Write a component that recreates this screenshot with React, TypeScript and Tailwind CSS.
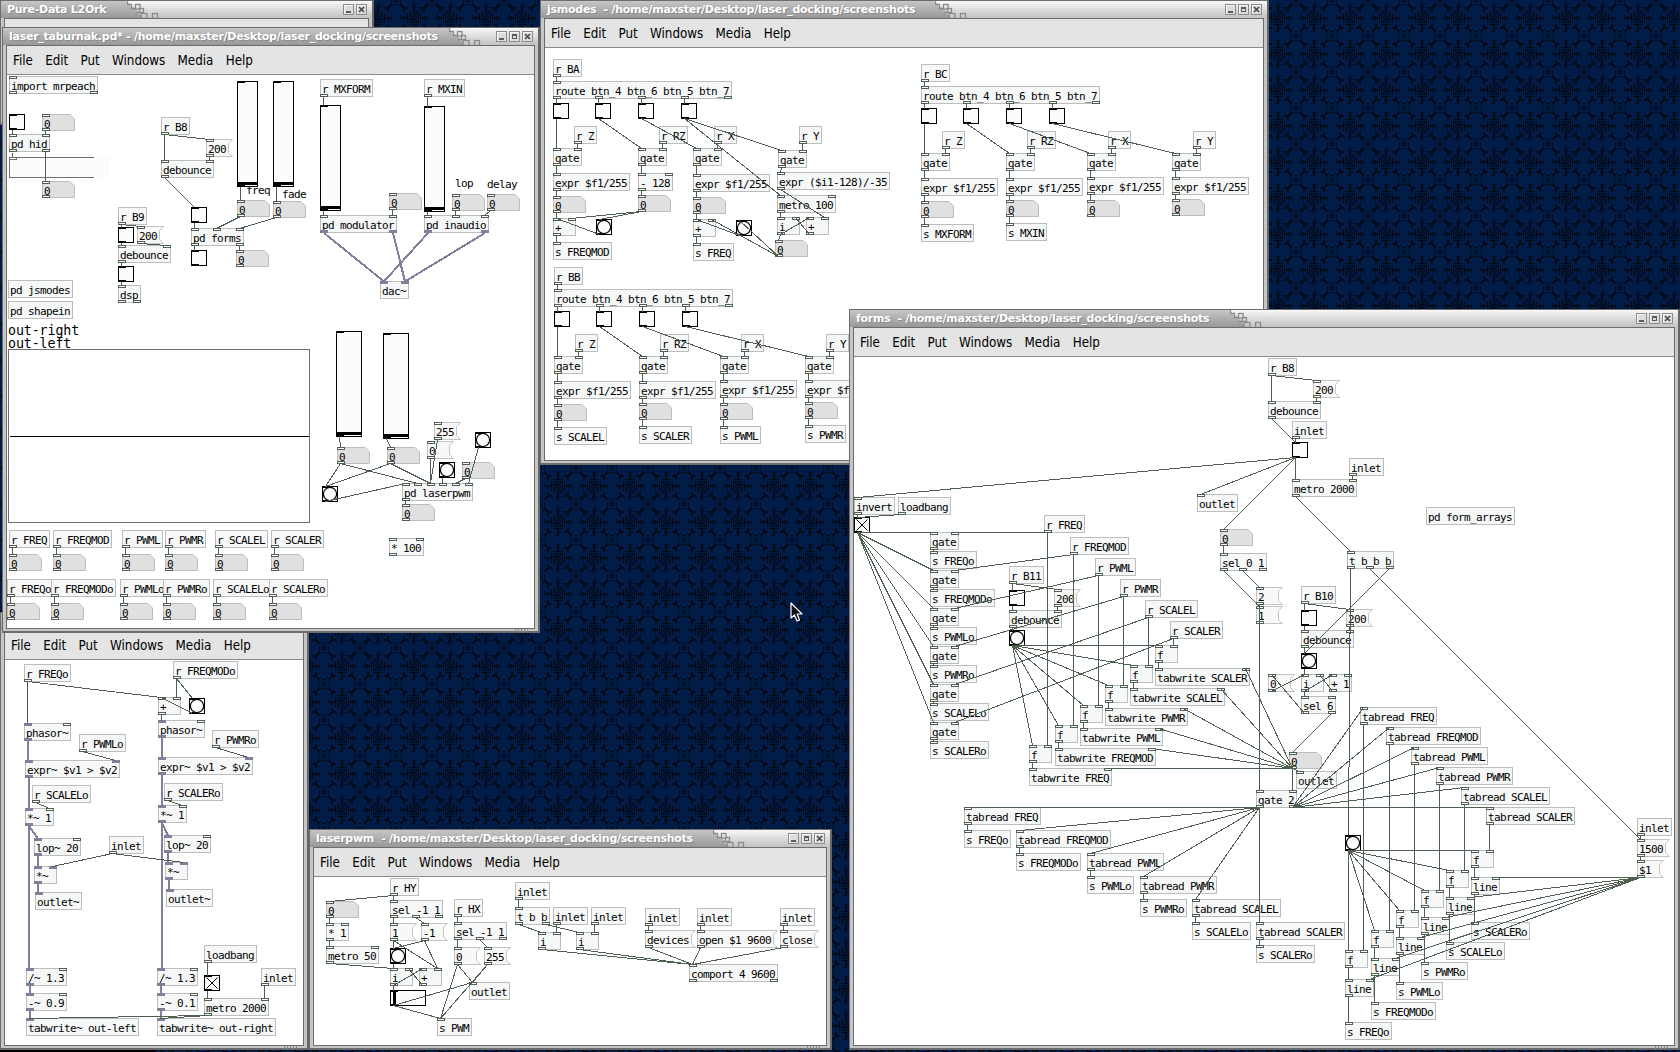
import React from "react";

type Kind = "obj" | "msg" | "num" | "tgl" | "chk" | "bang";

interface PatchNode {
  id: string;
  kind: Kind;
  x: number;
  y: number;
  ins: string;
  outs: string;
  text: string;
  w: number;
  h: number;
}

interface SliderSpec {
  id: string;
  x: number;
  y: number;
  w: number;
  h: number;
  horizontal?: boolean;
}

interface Patch {
  nodes: string;
  wires: string;
  sliders?: SliderSpec[];
}

/* Line format: id kind x y inlets outlets text.  c = control, s = signal, - = none */
function parseNodes(src: string): PatchNode[] {
  return src
    .trim()
    .split("\n")
    .map((line) => {
      const [id, kind, x, y, ins, outs, ...rest] = line.trim().split(" ");
      const text = rest.join(" ");
      const base = Math.max(22, text.length * 6 + 4);
      let w = base + 1;
      let h = 18;
      if (kind === "msg") w = base + 5;
      if (kind === "num") {
        w = 33;
        h = 17;
      }
      if (kind === "tgl" || kind === "chk" || kind === "bang") {
        w = 16;
        h = 16;
      }
      return {
        id,
        kind: kind as Kind,
        x: Number(x),
        y: Number(y),
        ins: ins === "-" ? "" : ins,
        outs: outs === "-" ? "" : outs,
        text,
        w,
        h,
      };
    });
}

function portOffset(node: PatchNode, count: number, i: number): number {
  if (count < 2) return 0;
  const full = node.kind === "msg" ? node.w - 5 : node.w - 1;
  return Math.floor(((full - 7) * i) / (count - 1));
}

function Port({ left, top, signal }: { left: number; top: number; signal: boolean }) {
  return (
    <span
      className={
        signal
          ? "absolute h-[3px] w-[8px] bg-[#80809a]"
          : "absolute h-[3px] w-[8px] border border-[#506050] bg-white"
      }
      style={{ left, top }}
    />
  );
}

const LABEL = "absolute left-[2px] top-[2px] whitespace-pre leading-[18px]";

function NodeView({ node, ox, oy }: { node: PatchNode; ox: number; oy: number }) {
  const pos = { left: node.x - ox, top: node.y - oy, width: node.w, height: node.h };
  if (node.kind === "tgl" || node.kind === "chk" || node.kind === "bang") {
    return (
      <div className="absolute border border-black bg-[#fcfcfc]" style={pos}>
        <svg className="absolute -left-px -top-px" width="16" height="16" viewBox="0 0 16 16">
          <path d="M1 1.5h7M1 14.5h7" stroke="#000" strokeWidth="1" shapeRendering="crispEdges" />
          {node.kind === "bang" && <circle cx="8" cy="8" r="6.6" fill="#fcfcfc" stroke="#000" strokeWidth="1.2" />}
          {node.kind === "chk" && <path d="M2.5 2.5l11 11M13.5 2.5l-11 11" stroke="#000" strokeWidth="1" />}
        </svg>
      </div>
    );
  }
  const w = node.w;
  const h = node.h;
  return (
    <div
      className={node.kind === "obj" ? "absolute bg-[#f6f8f8] outline outline-1 -outline-offset-1 outline-[#bdbdbd]" : "absolute"}
      style={pos}
    >
      {node.kind === "msg" && (
        <svg className="absolute left-0 top-0" width={w} height={h}>
          <path
            d={`M.5 .5H${w - 0.5}L${w - 4.5} 4.5V${h - 4.5}L${w - 0.5} ${h - 0.5}H.5Z`}
            fill="#f8f8f6"
            stroke="#c4c4c4"
          />
        </svg>
      )}
      {node.kind === "num" && (
        <svg className="absolute left-0 top-0" width={w} height={h}>
          <path d={`M.5 .5H${w - 5}L${w - 0.5} 5V${h - 0.5}H.5Z`} fill="#e0e0e0" stroke="#bdbdbd" />
        </svg>
      )}
      <span className={LABEL}>{node.text}</span>
      {node.ins.split("").map((c, i) => (
        <Port key={"i" + i} left={portOffset(node, node.ins.length, i)} top={0} signal={c === "s"} />
      ))}
      {node.outs.split("").map((c, i) => (
        <Port key={"o" + i} left={portOffset(node, node.outs.length, i)} top={h - 3} signal={c === "s"} />
      ))}
    </div>
  );
}

function Slider({ s, ox, oy }: { s: SliderSpec; ox: number; oy: number }) {
  return (
    <div
      className="absolute border border-black bg-[#fcfcfc]"
      style={{ left: s.x - ox, top: s.y - oy, width: s.w, height: s.h }}
    >
      <span className="absolute left-0 top-0 h-px w-[7px] bg-black" />
      {s.horizontal ? (
        <span className="absolute bottom-0 left-[2px] top-0 w-[3px] bg-black" />
      ) : (
        <span className="absolute bottom-px left-0 right-0 h-[3px] bg-black" />
      )}
      <span className="absolute bottom-0 left-0 h-px w-[7px] bg-black" />
    </div>
  );
}

function PatchCanvas({
  patch,
  ox,
  oy,
  children,
}: {
  patch: Patch;
  ox: number;
  oy: number;
  children?: React.ReactNode;
}) {
  const nodes = parseNodes(patch.nodes);
  const sliders = patch.sliders ?? [];
  const byId = new Map<string, PatchNode>();
  nodes.forEach((n) => byId.set(n.id, n));
  sliders.forEach((s) =>
    byId.set(s.id, { id: s.id, kind: "tgl", x: s.x, y: s.y, w: s.w, h: s.h, ins: "c", outs: "c", text: "" })
  );
  const wires = patch.wires
    .trim()
    .split(/\s+/)
    .map((link) => {
      const [a, b] = link.split(">");
      const [aid, ai = "0"] = a.split(".");
      const [bid, bi = "0"] = b.split(".");
      const from = byId.get(aid);
      const to = byId.get(bid);
      if (!from || !to) return null;
      const signal = from.outs[Number(ai)] === "s";
      const dx = signal ? 4 : 3.5;
      const x1 = from.x + portOffset(from, from.outs.length, Number(ai)) + dx - ox;
      const x2 = to.x + portOffset(to, to.ins.length, Number(bi)) + dx - ox;
      return {
        x1,
        y1: from.y + from.h - oy - (signal ? 0 : 0.5),
        x2: signal && Math.abs(x2 - x1) < 2 ? x1 : x2,
        y2: to.y - oy + 0.5,
        signal,
      };
    });
  return (
    <div className="relative min-h-0 flex-1 overflow-hidden bg-white font-['DejaVu_Sans_Mono','Liberation_Mono',monospace] text-[11px] tracking-[-0.622px] text-black">
      {children}
      {sliders.map((s) => (
        <Slider key={s.id} s={s} ox={ox} oy={oy} />
      ))}
      {nodes.map((n) => (
        <NodeView key={n.id} node={n} ox={ox} oy={oy} />
      ))}
      <svg className="pointer-events-none absolute inset-0 h-full w-full" shapeRendering="crispEdges">
        {wires.map(
          (l, i) =>
            l && (
              <line
                key={i}
                x1={l.x1}
                y1={l.y1}
                x2={l.x2}
                y2={l.y2}
                stroke={l.signal ? "#80809a" : "#506050"}
                strokeWidth={l.signal ? 2 : 1}
              />
            )
        )}
      </svg>
    </div>
  );
}

function TitleButton({ icon }: { icon: "min" | "max" | "close" }) {
  return (
    <svg width="11" height="11" viewBox="0 0 11 11" shapeRendering="crispEdges">
      <rect x="0.5" y="0.5" width="10" height="10" fill="#dcdcdc" stroke="#8c8c8c" />
      <path d="M1.5 9.5V1.5H9.5" fill="none" stroke="#f6f6f6" />
      {icon === "min" && <rect x="3" y="7" width="5" height="2" fill="#5c5c5c" />}
      {icon === "max" && <path d="M3 3h5v5H3zM4 5v2h3V5z" fill="#5c5c5c" fillRule="evenodd" />}
      {icon === "close" && (
        <path d="M3 3l5 5M8 3L3 8" stroke="#4c4c4c" strokeWidth="1.7" shapeRendering="auto" />
      )}
    </svg>
  );
}

function Ornament() {
  return (
    <svg width="34" height="17" viewBox="0 0 34 17" className="shrink-0">
      <defs>
        <linearGradient id="bar" x1="0" y1="0" x2="0" y2="1">
          <stop offset="0" stopColor="#c6c6c6" />
          <stop offset="1" stopColor="#989898" />
        </linearGradient>
      </defs>
      <path d="M0 0L3 5L9 8L12 13L16 17H0Z" fill="url(#bar)" />
      <g fill="none" stroke="#8a8a8a" strokeWidth="1.3">
        <path d="M.5 0v3.500h4v4h4" />
        <rect x="8.500" y="3.500" width="4.500" height="4.500" />
        <rect x="12.500" y="7.500" width="4" height="4" />
        <path d="M9 11.500h4" />
        <rect x="14" y="12.500" width="6" height="5" />
        <rect x="25.500" y="12.500" width="5" height="5" />
      </g>
    </svg>
  );
}

const MENUS = ["File", "Edit", "Put", "Windows", "Media", "Help"];

interface WindowProps {
  frame: string;
  title: string;
  barWidth: string;
  canMaximize?: boolean;
  children?: React.ReactNode;
}

function PdWindow({ frame, title, barWidth, canMaximize = true, children }: WindowProps) {
  return (
    <section
      className={`absolute flex flex-col border border-[#6c6c6c] border-r-2 border-r-[#666] border-b-2 bg-[#c6c6c6] ${frame}`}
    >
      <header className="flex h-[17px] shrink-0 bg-linear-to-b from-[#f8f8f8] to-[#c2c2c2]">
        <div className={`flex shrink-0 items-center bg-linear-to-b from-[#c6c6c6] to-[#989898] pl-[6px] ${barWidth}`}>
          <h2 className="whitespace-pre font-['DejaVu_Sans',sans-serif] text-[11px] leading-[15px] font-bold tracking-[-0.26px] text-white [text-shadow:1px_1px_0_#8a8a8a]">
            {title}
          </h2>
        </div>
        <Ornament />
        <div className="mt-[3px] mr-[5px] ml-auto flex gap-[2px]">
          <TitleButton icon="min" />
          {canMaximize && <TitleButton icon="max" />}
          <TitleButton icon="close" />
        </div>
      </header>
      <div className="mx-[3px] mb-[2px] flex min-h-0 flex-1 flex-col border border-[#6c6c6c]">
        {children}
      </div>
      <div className="absolute -bottom-px right-[10px] flex h-[3px] gap-[2px]">
        <i className="w-px bg-[#888]" />
        <i className="w-px bg-[#888]" />
        <i className="w-px bg-[#888]" />
        <i className="w-px bg-[#888]" />
        <i className="w-px bg-[#888]" />
      </div>
    </section>
  );
}

function MenuBar() {
  return (
    <nav className="flex h-[29px] shrink-0 items-center gap-[12.2px] border-b border-[#8a8a8a] bg-[#e4e4e4] pl-[6px] pt-px font-['DejaVu_Sans_Condensed','DejaVu_Sans',sans-serif] text-[13.3px] font-stretch-condensed text-black">
      {MENUS.map((m) => (
        <span key={m}>{m}</span>
      ))}
    </nav>
  );
}

const MAIN: Patch = {
  sliders: [
    { id: "s1", x: 237, y: 81, w: 21, h: 106 },
    { id: "s2", x: 273, y: 81, w: 21, h: 106 },
    { id: "s3", x: 320, y: 105, w: 21, h: 106 },
    { id: "s4", x: 424, y: 106, w: 21, h: 106 },
    { id: "s5", x: 336, y: 331, w: 26, h: 106 },
    { id: "s6", x: 383, y: 333, w: 26, h: 106 },
  ],
  nodes: `
imp obj 9 76 c cc import mrpeach
t1 tgl 9 114 c c
n1 num 42 114 c c 0
hid obj 9 134 cc cc pd hid
n2 num 42 181 c c 0
rb8 obj 161 117 - c r B8
m200 msg 206 139 c c 200
deb obj 161 160 cc c debounce
t2 tgl 191 207 c c
n3 num 237 200 c c 0
n4 num 273 201 c c 0
forms obj 191 228 ccc cc pd forms
t3 tgl 191 250 c c
n5 num 236 250 c c 0
rb9 obj 118 207 - c r B9
t4 tgl 118 227 c c
m2 msg 137 226 c c 200
deb2 obj 118 245 cc c debounce
t5 tgl 118 266 c c
dsp obj 118 285 c cc dsp
js obj 8 280 - - pd jsmodes
sh obj 8 301 - - pd shapein
rmx obj 320 79 - c r MXFORM
n6 num 389 193 c c 0
mod obj 320 215 cc ss pd modulator
rmi obj 424 79 - c r MXIN
n7 num 452 194 c c 0
n8 num 487 194 c c 0
ina obj 424 215 ccc ss pd inaudio
dac obj 380 281 ss - dac~
n9 num 337 447 c c 0
n10 num 387 447 c c 0
m255 msg 434 422 c c 255
m0 msg 427 441 c c 0
b1 bang 475 432 c c
b2 bang 439 462 c c
n11 num 462 462 c c 0
b3 bang 322 486 c c
pwm obj 402 483 cccccc c pd laserpwm
n12 num 402 504 c c 0
mul obj 389 538 cc c * 100
r1 obj 9 530 - c r FREQ
r2 obj 53 530 - c r FREQMOD
r3 obj 122 530 - c r PWML
r4 obj 165 530 - c r PWMR
r5 obj 215 530 - c r SCALEL
r6 obj 271 530 - c r SCALER
a1 num 9 554 c c 0
a2 num 53 554 c c 0
a3 num 122 554 c c 0
a4 num 165 554 c c 0
a5 num 215 554 c c 0
a6 num 271 554 c c 0
q1 obj 7 579 - c r FREQo
q2 obj 51 579 - c r FREQMODo
q3 obj 120 579 - c r PWMLo
q4 obj 163 579 - c r PWMRo
q5 obj 213 579 - c r SCALELo
q6 obj 269 579 - c r SCALERo
c1 num 7 603 c c 0
c2 num 51 603 c c 0
c3 num 120 603 c c 0
c4 num 163 603 c c 0
c5 num 213 603 c c 0
c6 num 269 603 c c 0`,
  wires: `t1>hid n1>hid.1 hid.1>n2 rb8>deb rb8>m200 m200>deb.1 deb>t2 t2>forms s1>n3 s2>n4 n3>forms.1 n4>forms.2
forms>t3 forms.1>n5 rb9>t4 rb9>m2 m2>deb2.1 t4>deb2 deb2>t5 t5>dsp rmx>s3 s3>mod n6>mod.1 rmi>s4 s4>ina n7>ina.1 n8>ina.2
mod>dac mod.1>dac.1 ina>dac ina.1>dac.1 s5>n9 s6>n10 n9>pwm.1 n9>b3 n10>b3 n10>pwm.2 b3>pwm m255>pwm.2 m0>pwm.2
b2>pwm.3 n11>pwm.4 b1>pwm.5 pwm>n12 r1>a1 r2>a2 r3>a3 r4>a4 r5>a5 r6>a6 q1>c1 q2>c2 q3>c3 q4>c4 q5>c5 q6>c6`,
};

const SHAPEIN: Patch = {
  nodes: `
rf obj 24 664 - c r FREQo
rm obj 173 661 - c r FREQMODo
add obj 158 697 cc c +
b bang 189 698 c c
p1 obj 24 723 sc s phasor~
p2 obj 158 720 sc s phasor~
rl obj 79 734 - c r PWMLo
rr obj 212 730 - c r PWMRo
e1 obj 25 760 ss s expr~ $v1 > $v2
e2 obj 158 757 ss s expr~ $v1 > $v2
sl obj 32 785 - c r SCALELo
sr obj 164 783 - c r SCALERo
x1 obj 25 808 sc s *~ 1
x2 obj 158 805 sc s *~ 1
l1 obj 34 838 sc s lop~ 20
l2 obj 164 835 sc s lop~ 20
in1 obj 109 836 - c inlet
y1 obj 34 866 ss s *~
y2 obj 165 862 ss s *~
o1 obj 35 892 s - outlet~
o2 obj 166 889 s - outlet~
d1 obj 26 968 sc s /~ 1.3
d2 obj 157 968 sc s /~ 1.3
k1 obj 26 993 sc s -~ 0.9
k2 obj 157 993 sc s -~ 0.1
w1 obj 26 1018 s - tabwrite~ out-left
w2 obj 157 1018 s - tabwrite~ out-right
lb obj 204 945 - c loadbang
tg chk 204 975 c c
in2 obj 261 968 - c inlet
met obj 204 998 cc c metro 2000`,
  wires: `rf>p1 rf>add rm>add.1 rm>b b>add add>p2 p1>e1 e1>x1 p2>e2 e2>x2 rl>e1.1 rr>e2.1 sl>x1.1 sr>x2.1 x1>l1 x1>d1 x2>l2 x2>d2
l1>y1 l2>y2 in1>y1.1 in1>y2.1 y1>o1 y2>o2 d1>k1 d2>k2 k1>w1 k2>w2 lb>tg tg>met in2>met.1 met>w1 met>w2`,
};

const LASERPWM: Patch = {
  sliders: [{ id: "hs", x: 390, y: 990, w: 36, h: 16, horizontal: true }],
  nodes: `
n num 326 901 c c 0
hy obj 390 878 - c r HY
s1 obj 390 900 c ccc sel -1 1
mu obj 326 923 cc c * 1
me obj 326 946 cc c metro 50
m1 msg 390 923 c c 1
m2 msg 421 923 c c -1
b bang 390 948 c c
i obj 390 968 cc c i
p obj 419 968 cc c +
hx obj 454 899 - c r HX
s2 obj 454 922 c ccc sel -1 1
m0 msg 454 947 c c 0
m255 msg 484 947 c c 255
out obj 469 982 c - outlet
spwm obj 437 1018 c - s PWM
in0 obj 515 882 - c inlet
tbb obj 515 907 c cc t b b
in1 obj 553 907 - c inlet
in2 obj 591 907 - c inlet
i1 obj 538 932 cc c i
i2 obj 576 932 cc c i
in3 obj 645 908 - c inlet
in4 obj 697 908 - c inlet
in5 obj 780 908 - c inlet
dev msg 645 930 c c devices
opn msg 697 930 c c open $1 9600
cls msg 780 930 c c close
com obj 689 964 c cc comport 4 9600`,
  wires: `hy>n hy>s1 n>mu mu>me me>i s1>m1 s1.1>m2 m1>b m1>p.1 m2>b m2>p.1 b>i i>p i>hs p>i.1 hs>out hs>spwm hx>s2 s2>m0 s2.1>m255
m0>out m0>spwm m255>out m255>spwm in0>tbb tbb>i1 tbb.1>i2 in1>i1.1 in2>i2.1 i1>com i2>com in3>dev in4>opn in5>cls dev>com opn>com cls>com`,
};

const JSMODES: Patch = {
  nodes: `
ba obj 553 59 - c r BA
ro obj 553 81 c ccccc route btn_4 btn_6 btn_5 btn_7
t0 tgl 553 103 c c
t1 tgl 595 103 c c
t2 tgl 638 103 c c
t3 tgl 681 103 c c
z obj 574 126 - c r Z
rz obj 659 126 - c r RZ
x obj 714 126 - c r X
y obj 799 126 - c r Y
g0 obj 553 148 cc c gate
g1 obj 638 148 cc c gate
g2 obj 693 148 cc c gate
g3 obj 778 150 cc c gate
e0 obj 553 173 c c expr $f1/255
e1 obj 638 173 cc c - 128
e2 obj 693 174 c c expr $f1/255
e3 obj 777 172 c c expr ($i1-128)/-35
n0 num 553 196 c c 0
n1 num 638 195 c c 0
n2 num 693 197 c c 0
me obj 777 195 cc c metro 100
p0 obj 553 218 cc c +
b0 bang 596 219 c c
p1 obj 693 219 cc c +
b1 bang 736 220 c c
i obj 777 217 cc c i
p2 obj 806 217 cc c +
n3 num 775 240 c c 0
sfm obj 553 242 c - s FREQMOD
sf obj 693 243 c - s FREQ
bb obj 554 267 - c r BB
Bro obj 554 289 c ccccc route btn_4 btn_6 btn_5 btn_7
Bt0 tgl 554 311 c c
Bt1 tgl 596 311 c c
Bt2 tgl 639 311 c c
Bt3 tgl 682 311 c c
Bz obj 575 334 - c r Z
Brz obj 660 334 - c r RZ
Bx obj 741 334 - c r X
By obj 826 334 - c r Y
Bg0 obj 554 356 cc c gate
Bg1 obj 639 356 cc c gate
Bg2 obj 720 356 cc c gate
Bg3 obj 805 356 cc c gate
Be0 obj 554 381 c c expr $f1/255
Be1 obj 639 381 c c expr $f1/255
Be2 obj 720 380 c c expr $f1/255
Be3 obj 805 380 c c expr $f1/255
Bn0 num 554 404 c c 0
Bn1 num 639 403 c c 0
Bn2 num 720 403 c c 0
Bn3 num 805 402 c c 0
Bs0 obj 554 427 c - s SCALEL
Bs1 obj 639 426 c - s SCALER
Bs2 obj 720 426 c - s PWML
Bs3 obj 805 425 c - s PWMR
bc obj 921 64 - c r BC
Cro obj 921 86 c ccccc route btn_4 btn_6 btn_5 btn_7
Ct0 tgl 921 108 c c
Ct1 tgl 963 108 c c
Ct2 tgl 1006 108 c c
Ct3 tgl 1049 108 c c
Cz obj 942 131 - c r Z
Crz obj 1027 131 - c r RZ
Cx obj 1108 131 - c r X
Cy obj 1193 131 - c r Y
Cg0 obj 921 153 cc c gate
Cg1 obj 1006 153 cc c gate
Cg2 obj 1087 153 cc c gate
Cg3 obj 1172 153 cc c gate
Ce0 obj 921 178 c c expr $f1/255
Ce1 obj 1006 178 c c expr $f1/255
Ce2 obj 1087 177 c c expr $f1/255
Ce3 obj 1172 177 c c expr $f1/255
Cn0 num 921 201 c c 0
Cn1 num 1006 200 c c 0
Cn2 num 1087 200 c c 0
Cn3 num 1172 199 c c 0
Cs0 obj 921 224 c - s MXFORM
Cs1 obj 1006 223 c - s MXIN`,
  wires: `ba>ro ro>t0 ro.1>t1 ro.2>t2 ro.3>t3 t0>g0 t1>g1 t2>g2 t3>g3 t3>me z>g0.1 rz>g1.1 x>g2.1 y>g3.1 g0>e0 g1>e1 g2>e2 g3>e3
e0>n0 e1>n1 e2>n2 n0>p0 n1>p0.1 n1>b0 b0>p0 p0>sfm n2>p1 b1>p1 n3>p1.1 n3>b1 p1>sf e3>p2.1 me>i i>p2 p2>i.1 i>n3
bb>Bro Bro>Bt0 Bro.1>Bt1 Bro.2>Bt2 Bro.3>Bt3 Bt0>Bg0 Bt1>Bg1 Bt2>Bg2 Bt3>Bg3 Bz>Bg0.1 Brz>Bg1.1 Bx>Bg2.1 By>Bg3.1
Bg0>Be0 Bg1>Be1 Bg2>Be2 Bg3>Be3 Be0>Bn0 Be1>Bn1 Be2>Bn2 Be3>Bn3 Bn0>Bs0 Bn1>Bs1 Bn2>Bs2 Bn3>Bs3
bc>Cro Cro>Ct0 Cro.1>Ct1 Cro.2>Ct2 Cro.3>Ct3 Ct0>Cg0 Ct1>Cg1 Ct2>Cg2 Ct3>Cg3 Cz>Cg0.1 Crz>Cg1.1 Cx>Cg2.1 Cy>Cg3.1
Cg0>Ce0 Cg1>Ce1 Cg2>Ce2 Cg3>Ce3 Ce0>Cn0 Ce1>Cn1 Ce2>Cn2 Ce3>Cn3 Cn0>Cs0 Cn1>Cs1`,
};

const FORMS: Patch = {
  nodes: `
inv obj 854 497 c c invert
lb obj 898 497 - c loadbang
tx chk 854 517 c c
g1 obj 930 532 cc c gate
g2 obj 930 570 cc c gate
g3 obj 930 608 cc c gate
g4 obj 930 646 cc c gate
g5 obj 930 684 cc c gate
g6 obj 930 722 cc c gate
s1 obj 930 551 c - s FREQo
s2 obj 930 589 c - s FREQMODo
s3 obj 930 627 c - s PWMLo
s4 obj 930 665 c - s PWMRo
s5 obj 930 703 c - s SCALELo
s6 obj 930 741 c - s SCALERo
r1 obj 1044 515 - c r FREQ
r2 obj 1070 537 - c r FREQMOD
r3 obj 1095 558 - c r PWML
r4 obj 1120 579 - c r PWMR
r5 obj 1145 600 - c r SCALEL
r6 obj 1170 621 - c r SCALER
b11 obj 1009 566 - c r B11
t11 tgl 1009 590 c c
m11 msg 1054 589 c c 200
d11 obj 1009 610 cc c debounce
bg11 bang 1009 630 c c
f6 obj 1155 645 cc c f
f5 obj 1130 665 cc c f
f4 obj 1105 685 cc c f
f3 obj 1080 705 cc c f
f2 obj 1055 725 cc c f
f1 obj 1029 745 cc c f
w6 obj 1155 668 cc - tabwrite SCALER
w5 obj 1130 688 cc - tabwrite SCALEL
w4 obj 1105 708 cc - tabwrite PWMR
w3 obj 1080 728 cc - tabwrite PWML
w2 obj 1055 748 cc - tabwrite FREQMOD
w1 obj 1029 768 cc - tabwrite FREQ
out1 obj 1197 494 c - outlet
b8 obj 1268 358 - c r B8
m8 msg 1313 380 c c 200
d8 obj 1268 401 cc c debounce
in8 obj 1292 421 - c inlet
t8 tgl 1292 442 c c
inm obj 1349 458 - c inlet
met obj 1292 479 cc c metro 2000
fa obj 1426 507 - - pd form_arrays
tb obj 1347 551 c ccc t b b b
n1 num 1220 529 c c 0
sel obj 1220 553 c ccc sel 0 1
m2 msg 1256 587 c c 2
m1 msg 1256 606 c c 1
b10 obj 1301 586 - c r B10
t10 tgl 1301 610 c c
m10 msg 1346 609 c c 200
d10 obj 1301 630 cc c debounce
bg10 bang 1301 653 c c
m0 msg 1268 674 c c 0
i obj 1301 674 cc c i
p1 obj 1329 674 cc c + 1
sel6 obj 1301 696 cc cc sel 6
n2 num 1289 752 c c 0
out2 obj 1296 771 c - outlet
ga obj 1256 790 cc cc gate 2
u1 obj 1360 707 c c tabread FREQ
u2 obj 1386 727 c c tabread FREQMOD
u3 obj 1411 747 c c tabread PWML
u4 obj 1436 767 c c tabread PWMR
u5 obj 1461 787 c c tabread SCALEL
u6 obj 1486 807 c c tabread SCALER
bg bang 1345 835 c c
h6 obj 1471 850 cc c f
h5 obj 1446 870 cc c f
h4 obj 1421 890 cc c f
h3 obj 1396 910 cc c f
h2 obj 1371 930 cc c f
h1 obj 1345 950 cc c f
l6 obj 1471 877 cc c line
l5 obj 1446 897 cc c line
l4 obj 1421 917 cc c line
l3 obj 1396 937 cc c line
l2 obj 1371 958 cc c line
l1 obj 1345 979 cc c line
k6 obj 1471 922 c - s SCALERo
k5 obj 1446 942 c - s SCALELo
k4 obj 1421 962 c - s PWMRo
k3 obj 1396 982 c - s PWMLo
k2 obj 1371 1002 c - s FREQMODo
k1 obj 1345 1022 c - s FREQo
in9 obj 1637 818 - c inlet
m1500 msg 1637 839 c c 1500
md msg 1637 860 c c $1
v1 obj 964 807 c c tabread FREQ
v2 obj 1016 830 c c tabread FREQMOD
v3 obj 1087 853 c c tabread PWML
v4 obj 1140 876 c c tabread PWMR
v5 obj 1192 899 c c tabread SCALEL
v6 obj 1256 922 c c tabread SCALER
j1 obj 964 830 c - s FREQo
j2 obj 1016 853 c - s FREQMODo
j3 obj 1087 876 c - s PWMLo
j4 obj 1140 899 c - s PWMRo
j5 obj 1192 922 c - s SCALELo
j6 obj 1256 945 c - s SCALERo`,
  wires: `inv>tx lb>tx tx>g1 tx>g2 tx>g3 tx>g4 tx>g5 tx>g6 g1>s1 g2>s2 g3>s3 g4>s4 g5>s5 g6>s6
r1>g1.1 r2>g2.1 r3>g3.1 r4>g4.1 r5>g5.1 r6>g6.1 r1>f1.1 r2>f2.1 r3>f3.1 r4>f4.1 r5>f5.1 r6>f6.1
b11>t11 b11>m11 m11>d11.1 t11>d11 d11>bg11 bg11>f1 bg11>f2 bg11>f3 bg11>f4 bg11>f5 bg11>f6 f1>w1 f2>w2 f3>w3 f4>w4 f5>w5 f6>w6
b8>d8 b8>m8 m8>d8.1 d8>t8 in8>t8 t8>inv t8>out1 t8>n1 t8>met inm>met.1 met>tb n1>sel sel>m1 sel.1>m2 m2>ga m1>ga
tb>bg tb.1>m1500 tb.2>bg10 b10>t10 b10>m10 m10>d10.1 t10>d10 d10>bg10 bg10>i m0>i i>p1 p1>i.1 i>sel6 sel6>m0 sel6.1>n2
n2>out2 n2>ga.1 n2>w1.1 n2>w2.1 n2>w3.1 n2>w4.1 n2>w5.1 n2>w6.1 ga>v1 ga>v2 ga>v3 ga>v4 ga>v5 ga>v6
ga.1>u1 ga.1>u2 ga.1>u3 ga.1>u4 ga.1>u5 ga.1>u6 u1>h1.1 u2>h2.1 u3>h3.1 u4>h4.1 u5>h5.1 u6>h6.1
bg>h1 bg>h2 bg>h3 bg>h4 bg>h5 bg>h6 h1>l1 h2>l2 h3>l3 h4>l4 h5>l5 h6>l6 l1>k1 l2>k2 l3>k3 l4>k4 l5>k5 l6>k6
in9>m1500 m1500>md md>l1.1 md>l2.1 md>l3.1 md>l4.1 md>l5.1 md>l6.1 v1>j1 v2>j2 v3>j3 v4>j4 v5>j5 v6>j6`,
};

function Wallpaper() {
  return (
    <svg className="absolute inset-0 h-full w-full" shapeRendering="crispEdges">
      <defs>
        <g id="burst" fill="none" stroke="#040a18">
          <path d="M-9 -9L-4 -4M9 -9L4 -4M9 9L4 4M-9 9L-4 4" strokeWidth="1.8" />
          <path d="M-2 -4.500h4M-2 4.500h4M-4.500 -2v4M4.500 -2v4" strokeWidth="1.3" />
          <path d="M-1.500 -1.500h3v3h-3z" />
          <path d="M-7 -3l4 -4M7 -3l-4 -4M7 3l-4 4M-7 3l4 4" />
          <path d="M-12 -8h5M-8 -12v5M12 -8h-5M8 -12v5M12 8h-5M8 12v-5M-12 8h5M-8 12v-5" strokeWidth="1.5" />
        </g>
        <pattern id="tile" width="36" height="36" patternUnits="userSpaceOnUse">
          <rect width="36" height="36" fill="#001c47" />
          <g fill="none" stroke="#040a18">
            <rect x="13.500" y="13.500" width="9" height="9" />
            <rect x="16" y="16" width="4" height="4" strokeWidth="1.4" />
            <path d="M13 11.500h10M13 24.500h10M11.500 13v10M24.500 13v10" strokeWidth="1.2" />
            <path d="M18 11V4M15.500 7.500h5M18 4.500h3M18 25v7M15.500 28.500h5M15 31.500h3" strokeWidth="1.7" />
            <path d="M11 18H4M7.500 15.500v5M4.500 15v3M25 18h7M28.500 15.500v5M31.500 18v3" strokeWidth="1.7" />
          </g>
          <use href="#burst" />
          <use href="#burst" x="36" />
          <use href="#burst" y="36" />
          <use href="#burst" x="36" y="36" />
        </pattern>
      </defs>
      <rect width="100%" height="100%" fill="url(#tile)" />
    </svg>
  );
}

export default function App() {
  return (
    <main className="relative h-[1052px] w-[1680px] overflow-hidden bg-[#001d49]">
      <Wallpaper />
      <div className="absolute bottom-0 left-0 h-[3px] w-[156px] bg-black" />

      <PdWindow
        frame="left-0 top-0 h-[125px] w-[374px]"
        title="Pure-Data L2Ork"
        barWidth="w-[126px]"
        canMaximize={false}
      >
        <div className="flex-1 bg-[#e4e4e4]" />
      </PdWindow>

      <PdWindow frame="left-0 top-[612px] h-[438px] w-[309px]" title="" barWidth="w-[200px]">
        <MenuBar />
        <PatchCanvas patch={SHAPEIN} ox={5} oy={660} />
      </PdWindow>

      <PdWindow
        frame="left-[2px] top-[27px] h-[606px] w-[538px]"
        title="laser_taburnak.pd* - /home/maxster/Desktop/laser_docking/screenshots"
        barWidth="w-[446px]"
      >
        <MenuBar />
        <PatchCanvas patch={MAIN} ox={7} oy={75}>
          <div className="absolute left-[2px] top-[82px] h-[21px] w-[101px] bg-[#fcfcfc]" />
          <div className="absolute left-[2px] top-[82px] h-[21px] w-[85px] border border-r-0 border-[#707070]">
            <span className="absolute -left-px -top-px h-[3px] w-[8px] border border-[#707070] bg-white" />
          </div>
          <div className="absolute left-[5px] top-[78px] h-[4px] w-px bg-[#506050]" />
          <span className="absolute left-[239px] top-[109px] leading-[14px]">freq</span>
          <span className="absolute left-[275px] top-[113px] leading-[14px]">fade</span>
          <span className="absolute left-[448px] top-[102px] leading-[14px]">lop</span>
          <span className="absolute left-[480px] top-[103px] leading-[14px]">delay</span>
          <div className="absolute left-[1px] top-[249px] flex flex-col text-[13.3px] leading-[13px] tracking-[-0.1px]">
            <span>out-right</span>
            <span>out-left</span>
          </div>
          <div className="absolute left-[1px] top-[274px] h-[174px] w-[302px] border border-[#707070]">
            <div className="absolute left-px right-0 top-[86px] h-px bg-black" />
          </div>
        </PatchCanvas>
      </PdWindow>

      <PdWindow
        frame="left-[309px] top-[829px] h-[221px] w-[523px]"
        title="laserpwm  - /home/maxster/Desktop/laser_docking/screenshots"
        barWidth="w-[403px]"
      >
        <MenuBar />
        <PatchCanvas patch={LASERPWM} ox={314} oy={877} />
      </PdWindow>

      <PdWindow
        frame="left-[540px] top-0 h-[465px] w-[729px]"
        title="jsmodes  - /home/maxster/Desktop/laser_docking/screenshots"
        barWidth="w-[394px]"
      >
        <MenuBar />
        <PatchCanvas patch={JSMODES} ox={545} oy={48} />
      </PdWindow>

      <PdWindow
        frame="left-[849px] top-[309px] h-[741px] w-[831px]"
        title="forms  - /home/maxster/Desktop/laser_docking/screenshots"
        barWidth="w-[380px]"
      >
        <MenuBar />
        <PatchCanvas patch={FORMS} ox={854} oy={357} />
      </PdWindow>

      <svg className="absolute left-[790px] top-[602px]" width="14" height="21" viewBox="0 0 14 21">
        <path
          d="M1 1V16L4.500 13L7 19L9.500 18L7.200 12H12Z"
          fill="#111"
          stroke="#fff"
          strokeWidth="1.2"
          strokeLinejoin="round"
        />
      </svg>
    </main>
  );
}
